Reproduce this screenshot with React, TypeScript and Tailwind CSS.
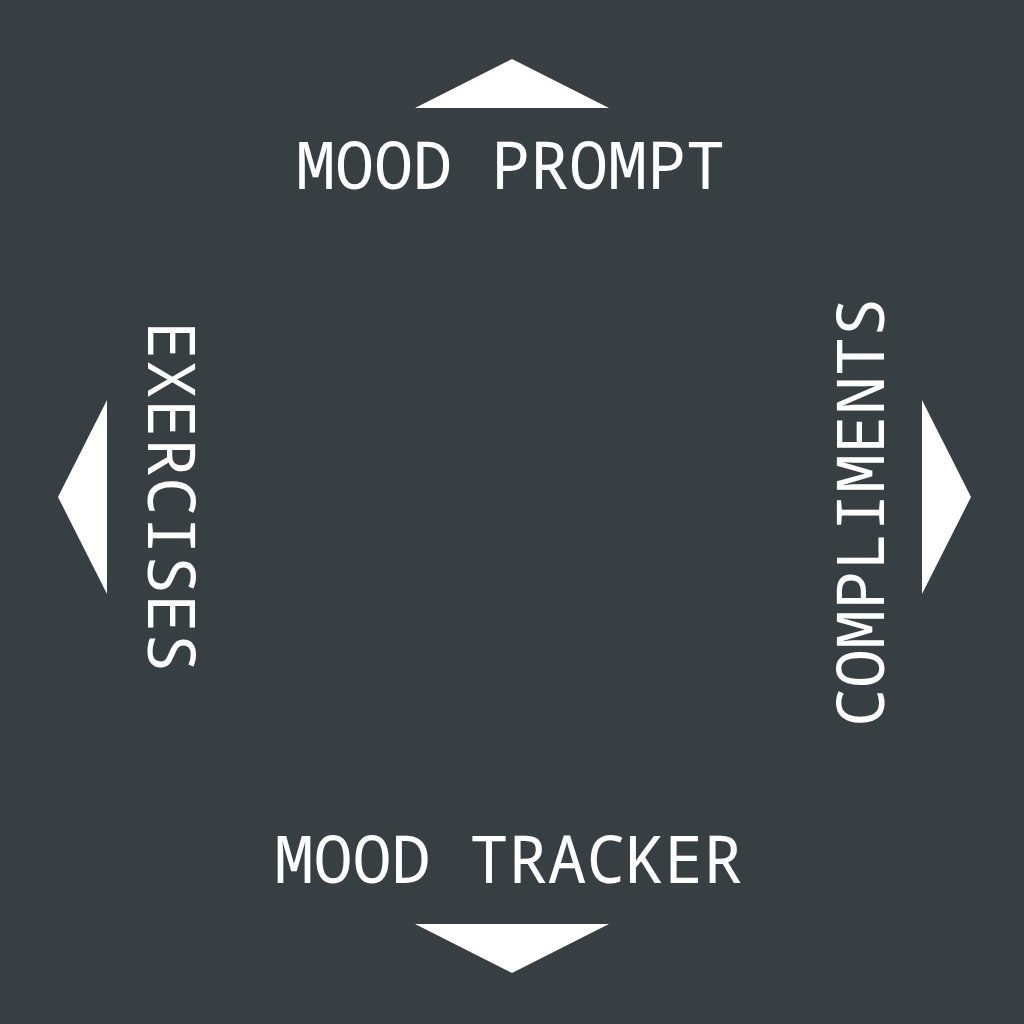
const label =
  'whitespace-pre text-[65px] leading-[76px] text-white font-["Noto_Sans_Mono","DejaVu_Sans_Mono",monospace]';

function HorizontalArrow({ points }: { points: string }) {
  return (
    <svg aria-hidden="true" viewBox="0 0 194 49" className="h-[49px] w-[194px] fill-white">
      <polygon points={points} />
    </svg>
  );
}

function VerticalArrow({ points }: { points: string }) {
  return (
    <svg aria-hidden="true" viewBox="0 0 49 194" className="mb-8 h-[194px] w-[49px] fill-white">
      <polygon points={points} />
    </svg>
  );
}

export default function App() {
  return (
    <main className="flex min-h-screen flex-col justify-between bg-[#383f42] pt-[59px] pr-[53px] pb-[51px] pl-[58px]">
      <button type="button" className="mr-1 flex flex-col items-center gap-[18px] self-center">
        <HorizontalArrow points="97,0 194,49 0,49" />
        <span className={`${label} pr-1`}>MOOD PROMPT</span>
      </button>

      <div className="mt-1 flex items-center justify-between">
        <button type="button" className="flex items-center gap-7">
          <VerticalArrow points="0,97 49,0 49,194" />
          <span className={`${label} mb-8 [writing-mode:vertical-rl]`}>EXERCISES</span>
        </button>
        <button type="button" className="flex items-center gap-[25px]">
          <span className={`${label} rotate-180 [writing-mode:vertical-rl]`}>COMPLIMENTS</span>
          <VerticalArrow points="49,97 0,0 0,194" />
        </button>
      </div>

      <button type="button" className="mr-1 flex flex-col items-center gap-7 self-center">
        <span className={`${label} pr-2`}>MOOD TRACKER</span>
        <HorizontalArrow points="0,0 194,0 97,49" />
      </button>
    </main>
  );
}
